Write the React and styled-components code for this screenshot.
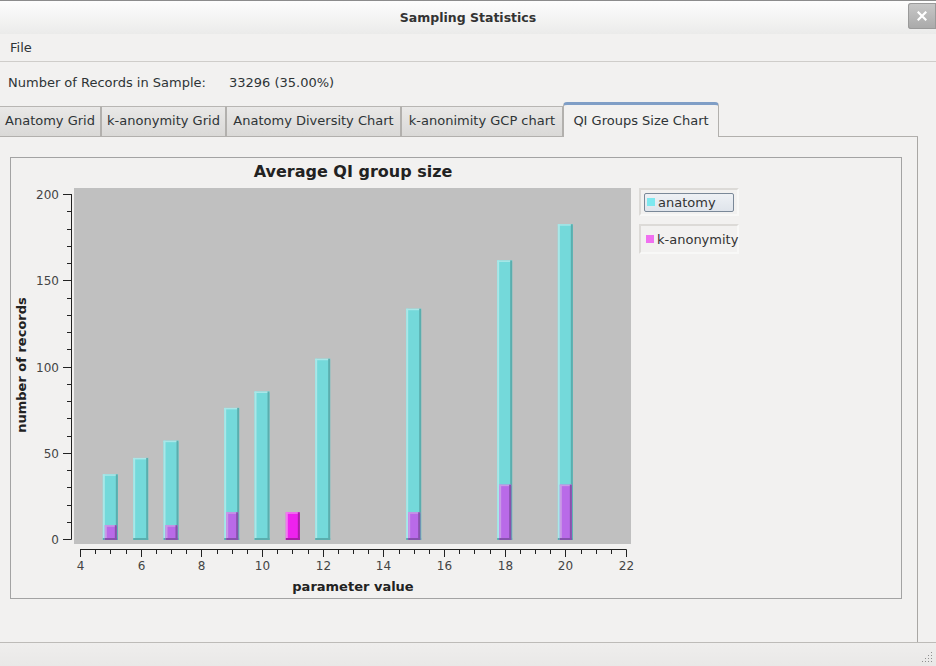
import React from 'react'
import styled, { createGlobalStyle } from 'styled-components'

const GlobalStyle = createGlobalStyle`
  html, body {
    margin: 0;
    padding: 0;
    background: #f2f1f0;
  }
  body {
    font-family: "DejaVu Sans", "Liberation Sans", sans-serif;
    color: #2e3436;
  }
`

const Window = styled.div`
  width: 936px;
  height: 666px;
  display: flex;
  flex-direction: column;
  background: #f2f1f0;
  overflow: hidden;
`

const TitleBar = styled.div`
  height: 34px;
  box-sizing: border-box;
  border-top: 1px solid #8c8c8c;
  background: linear-gradient(#fdfdfd, #ebebea);
  display: grid;
  grid-template-columns: 1fr auto 1fr;
  align-items: center;
`

const Title = styled.div`
  grid-column: 2;
  font-weight: 700;
  font-size: 12.5px;
  color: #333;
  margin-top: -1px;
`

const CloseButton = styled.div`
  grid-column: 3;
  justify-self: end;
  align-self: start;
  margin-top: 2px;
  width: 28px;
  height: 26px;
  border-radius: 3px 0 0 3px;
  background: linear-gradient(#c8c8c8, #a9a9a9);
  box-shadow: inset 0 0 0 1px #9a9a9a;
  display: flex;
  align-items: center;
  justify-content: center;
`

const MenuBar = styled.div`
  height: 28px;
  box-sizing: border-box;
  border-bottom: 1px solid #cfcdca;
  display: flex;
  align-items: center;
  padding-left: 10px;
  font-size: 13px;
  color: #2e3436;
`

const InfoRow = styled.div`
  height: 40px;
  display: flex;
  align-items: center;
  gap: 23px;
  padding: 1px 0 0 8px;
  box-sizing: border-box;
  font-size: 13px;
  color: #2e3436;
`

const TabStrip = styled.div`
  height: 35px;
  display: flex;
  align-items: flex-end;
  width: 918px;
  box-sizing: border-box;
  border-bottom: 1px solid #b2b0ad;
`

const Tab = styled.div`
  width: ${({ $w }) => $w}px;
  height: ${({ $active }) => ($active ? '35px' : '30px')};
  box-sizing: border-box;
  margin-bottom: ${({ $active }) => ($active ? '-1px' : '0')};
  padding-bottom: ${({ $active }) => ($active ? '1px' : '3px')};
  display: flex;
  align-items: center;
  justify-content: center;
  font-size: 13px;
  color: #2e3436;
  white-space: nowrap;
  border: 1px solid #b2b0ad;
  border-bottom: none;
  border-left: ${({ $first }) => ($first ? 'none' : '1px solid #b2b0ad')};
  border-top: ${({ $active }) => ($active ? '3px solid #7f9ec6' : '1px solid #b8b6b3')};
  border-radius: ${({ $active }) => ($active ? '4px 4px 0 0' : '0')};
  background: ${({ $active }) =>
    $active ? '#f2f1f0' : 'linear-gradient(#e9e8e7, #dad9d7)'};
`

const ContentPanel = styled.div`
  width: 918px;
  height: 505px;
  box-sizing: border-box;
  border-right: 1px solid #a9a7a4;
  padding: 20px 0 0 10px;
`

const ChartPanel = styled.div`
  width: 892px;
  height: 442px;
  box-sizing: border-box;
  border: 1px solid #a3a3a3;
  display: flex;
  align-items: flex-start;
`

const Legend = styled.div`
  display: flex;
  flex-direction: column;
  gap: 8px;
  margin-top: 30px;
  margin-left: 1px;
`

const LegendItem = styled.div`
  width: 100px;
  height: ${({ $h }) => $h}px;
  box-sizing: border-box;
  border: 2px solid #dcdad7;
  border-right-color: #f8f8f7;
  border-bottom-color: #f8f8f7;
  padding: 3px 3px 3px 3px;
  display: flex;
  align-items: center;
`

const LegendEntry = styled.div`
  flex: 1;
  height: 19px;
  box-sizing: border-box;
  display: flex;
  align-items: center;
  gap: 3px;
  padding-left: ${({ $selected }) => ($selected ? '2px' : '1px')};
  font-size: 13px;
  color: #333;
  white-space: nowrap;
  border: 1px solid ${({ $selected }) => ($selected ? '#7a8898' : 'transparent')};
  border-radius: 2px;
  background: ${({ $selected }) =>
    $selected ? 'linear-gradient(#eef1f5, #dfe4eb)' : 'transparent'};
`

const Swatch = styled.span`
  width: 8px;
  height: 8px;
  background: ${({ $color }) => $color};
  flex: none;
`

const StatusBar = styled.div`
  flex: 1;
  box-sizing: border-box;
  border-top: 1px solid #bdbbb8;
  background: linear-gradient(#efeeed, #e9e8e7);
  display: flex;
  justify-content: flex-end;
  align-items: flex-end;
`

const ChartTitle = styled.text`
  font-family: "DejaVu Sans", sans-serif;
  font-weight: 700;
  font-size: 16px;
  fill: #222;
`

const TickLabel = styled.text`
  font-family: "DejaVu Sans", sans-serif;
  font-size: 12px;
  fill: #444;
`

const AxisTitle = styled.text`
  font-family: "DejaVu Sans", sans-serif;
  font-weight: 700;
  font-size: 13px;
  fill: #222;
`

const tabs = [
  ['Anatomy Grid', 101],
  ['k-anonymity Grid', 125],
  ['Anatomy Diversity Chart', 175],
  ['k-anonimity GCP chart', 162],
  ['QI Groups Size Chart', 156],
]

const anatomy = [
  [5, 37.5], [6, 47], [7, 57], [9, 76], [10, 85.5], [12, 104.5], [15, 133.5], [18, 161.5], [20, 182.5],
]
const kAnon = [
  [5, 8], [7, 8], [9, 15.5], [11, 15.5], [15, 15.5], [18, 31.5], [20, 31.5],
]

const px = (v) => 80 + (v - 4) * (546 / 18)
const py = (v) => 539 - v * 1.725

const CYAN = { fill: '#74d9da', light: '#a9e7e8', dark: '#5aaeae' }
const PURPLE = { fill: '#b96ae8', light: '#c89ae6', dark: '#8652ac' }
const MAGENTA = { fill: '#ee22ee', light: '#f27af2', dark: '#a71ea7' }

function Bar({ cx, value, w, c }) {
  const top = py(value)
  const bottom = 540
  const x = cx - w / 2
  const h = bottom - top
  return (
    <g>
      <rect x={x} y={top} width={w} height={h} fill={c.fill} />
      <rect x={x} y={top} width={2} height={h} fill={c.light} />
      <rect x={x} y={top} width={w} height={1.5} fill={c.light} />
      <rect x={x + w - 2} y={top} width={2} height={h} fill={c.dark} />
      <rect x={x} y={bottom - 2} width={w} height={2} fill={c.dark} />
    </g>
  )
}

function Chart() {
  const yTicks = []
  for (let v = 0; v <= 200; v += 10) yTicks.push(v)
  const xTicks = []
  for (let v = 4; v <= 22; v += 0.5) xTicks.push(v)
  const anaMap = Object.fromEntries(anatomy)

  return (
    <svg width="627" height="440" viewBox="11 158 627 440">
      <ChartTitle x="353" y="177" textAnchor="middle">Average QI group size</ChartTitle>
      <rect x="74" y="188" width="557" height="356" fill="#c0c0c0" />

      <line x1="71.5" y1="194" x2="71.5" y2="539.5" stroke="#222" />
      {yTicks.map((v) => {
        const y = Math.round(py(v)) + 0.5
        const major = v % 50 === 0
        return (
          <g key={v}>
            <line x1={major ? 63 : 67} y1={y} x2="71.5" y2={y} stroke="#222" />
            {major && (
              <TickLabel x="59" y={y + 4.5} textAnchor="end">{v}</TickLabel>
            )}
          </g>
        )
      })}

      <line x1="80" y1="549.5" x2="626.5" y2="549.5" stroke="#222" />
      {xTicks.map((v) => {
        const x = Math.round(px(v)) + 0.5
        const major = v % 2 === 0
        return (
          <g key={v}>
            <line x1={x} y1="549.5" x2={x} y2={major ? 557 : 554} stroke="#222" />
            {major && (
              <TickLabel x={x} y="570" textAnchor="middle">{v}</TickLabel>
            )}
          </g>
        )
      })}

      {anatomy.map(([k, v]) => (
        <Bar key={`a${k}`} cx={px(k)} value={v} w={15} c={CYAN} />
      ))}
      {kAnon.map(([k, v]) => (
        <Bar
          key={`k${k}`}
          cx={px(k) + 0.5}
          value={v}
          w={anaMap[k] ? 12 : 14}
          c={anaMap[k] ? PURPLE : MAGENTA}
        />
      ))}

      <AxisTitle transform="translate(26 365) rotate(-90)" textAnchor="middle">
        number of records
      </AxisTitle>
      <AxisTitle x="353" y="591" textAnchor="middle">parameter value</AxisTitle>
    </svg>
  )
}

function Grip() {
  const dots = []
  for (let r = 0; r < 4; r++) {
    for (let c = 0; c < 4; c++) {
      if (c + r >= 3) dots.push(<rect key={`${r}${c}`} x={c * 3} y={r * 3} width="1" height="1" fill="#8f8f8f" />)
    }
  }
  return (
    <svg width="12" height="12" style={{ margin: '0 2px 2px 0' }}>
      {dots}
    </svg>
  )
}

export default function App() {
  return (
    <Window>
      <GlobalStyle />
      <TitleBar>
        <Title>Sampling Statistics</Title>
        <CloseButton>
          <svg width="10" height="10" viewBox="0 0 10 10">
            <path d="M1.5 1.5 L8.5 8.5 M8.5 1.5 L1.5 8.5" stroke="#fff" strokeWidth="2.2" strokeLinecap="square" />
          </svg>
        </CloseButton>
      </TitleBar>
      <MenuBar>File</MenuBar>
      <InfoRow>
        <span>Number of Records in Sample:</span>
        <span>33296 (35.00%)</span>
      </InfoRow>
      <TabStrip>
        {tabs.map(([t, w], i) => (
          <Tab key={t} $w={w} $first={i === 0} $active={i === tabs.length - 1}>
            {t}
          </Tab>
        ))}
      </TabStrip>
      <ContentPanel>
        <ChartPanel>
          <Chart />
          <Legend>
            <LegendItem $h={28}>
              <LegendEntry $selected>
                <Swatch $color="#7ee8ef" />
                anatomy
              </LegendEntry>
            </LegendItem>
            <LegendItem $h={30}>
              <LegendEntry>
                <Swatch $color="#f070f0" />
                k-anonymity
              </LegendEntry>
            </LegendItem>
          </Legend>
        </ChartPanel>
      </ContentPanel>
      <StatusBar>
        <Grip />
      </StatusBar>
    </Window>
  )
}
